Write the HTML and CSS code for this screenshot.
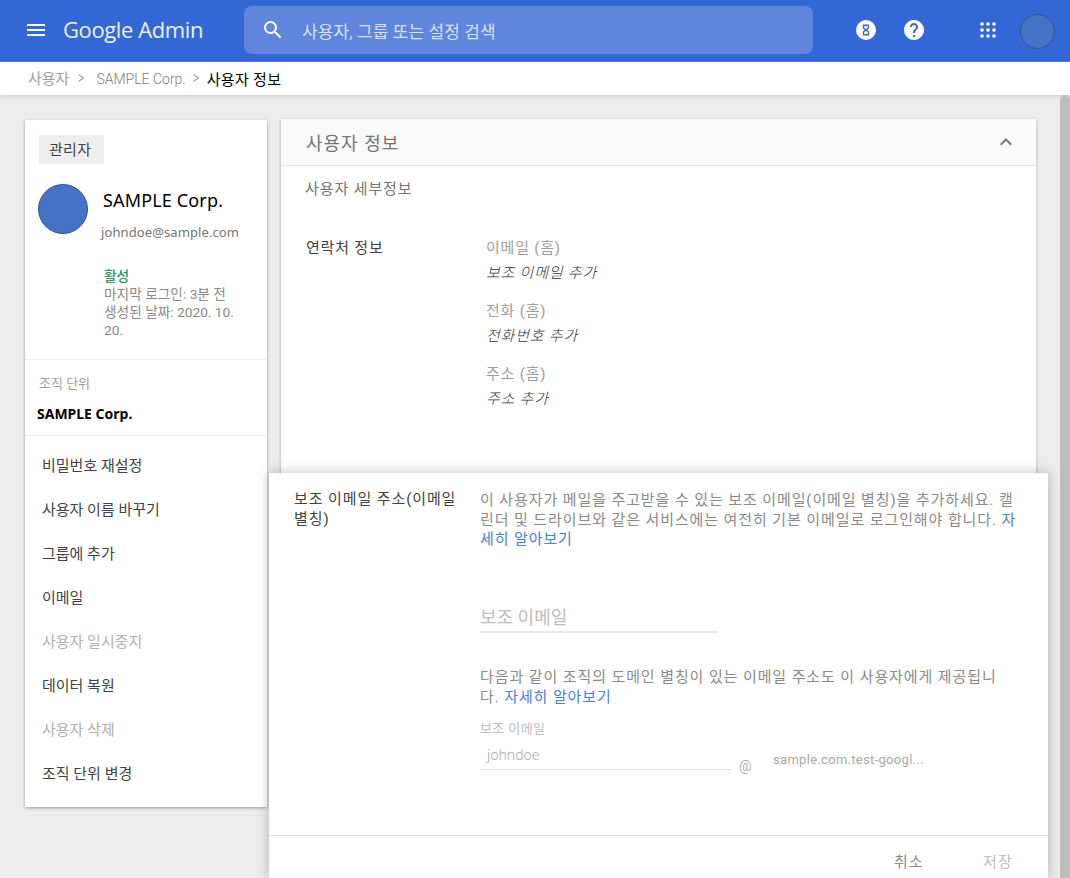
FILE: index.html
```html
<!DOCTYPE html>
<html lang="ko">

<head>
    <meta charset="UTF-8">
    <meta name="viewport" content="width=device-width, initial-scale=1.0">
    <title>Google Admin</title>
    <link rel="stylesheet" href="styles.css">
</head>

<body>
    <header class="top-bar">
        <svg class="menu-icon" width="24" height="24" viewBox="0 0 24 24"><path d="M3 18h18v-2H3zM3 13h18v-2H3zM3 6v2h18V6z" fill="#fff"/></svg>
        <div class="logo"><span class="logo-google">Google</span> <span class="logo-admin">Admin</span></div>
        <div class="search-box">
            <svg width="24" height="24" viewBox="0 0 24 24"><path d="M15.5 14h-.79l-.28-.27A6.47 6.47 0 0 0 16 9.5 6.5 6.5 0 1 0 9.5 16c1.61 0 3.09-.59 4.23-1.57l.27.28v.79l5 4.99L20.49 19zm-6 0C7.01 14 5 11.99 5 9.5S7.01 5 9.5 5 14 7.01 14 9.5 11.99 14 9.5 14z" fill="#fff"/></svg>
            <span>사용자, 그룹 또는 설정 검색</span>
        </div>
        <div class="top-actions">
            <svg class="timer-icon" width="20" height="20" viewBox="0 0 20 20"><circle cx="10" cy="10" r="10" fill="#fff"/><path fill-rule="evenodd" d="M6.800 4.500h6.400v3.800L11.300 10l1.900 1.700v3.800H6.800v-3.800L8.700 10 6.800 8.300zM8.200 5.900v1.800L10 9.200l1.800-1.500V5.900zM10 10.800l-1.800 1.500v1.800h3.600v-1.800z" fill="#3367d6"/></svg>
            <svg class="help-icon" width="24" height="24" viewBox="0 0 24 24"><path d="M12 2C6.480 2 2 6.480 2 12s4.480 10 10 10 10-4.480 10-10S17.520 2 12 2zm1 17h-2v-2h2zm2.070-7.750-.9.920C13.450 12.900 13 13.500 13 15h-2v-.5c0-1.100.45-2.100 1.170-2.830l1.240-1.260c.37-.36.590-.86.590-1.410 0-1.100-.9-2-2-2s-2 .9-2 2H8c0-2.210 1.790-4 4-4s4 1.790 4 4c0 .88-.36 1.680-.93 2.250z" fill="#fff"/></svg>
            <svg class="apps-icon" width="16" height="16" viewBox="0 0 16 16" fill="#fff"><circle cx="2" cy="2" r="1.800"/><circle cx="8" cy="2" r="1.800"/><circle cx="14" cy="2" r="1.800"/><circle cx="2" cy="8" r="1.800"/><circle cx="8" cy="8" r="1.800"/><circle cx="14" cy="8" r="1.800"/><circle cx="2" cy="14" r="1.800"/><circle cx="8" cy="14" r="1.800"/><circle cx="14" cy="14" r="1.800"/></svg>
            <div class="top-avatar"></div>
        </div>
    </header>

    <nav class="breadcrumb">
        <span class="crumb-root">사용자</span>
        <svg class="crumb-sep" width="8" height="10" viewBox="0 0 8 10"><path d="M1.500 1.500l5 3.500-5 3.500" fill="none" stroke="#9e9e9e" stroke-width="1.100"/></svg>
        <span class="crumb-org">SAMPLE Corp.</span>
        <svg class="crumb-sep crumb-sep-last" width="8" height="10" viewBox="0 0 8 10"><path d="M1.500 1.500l5 3.500-5 3.500" fill="none" stroke="#9e9e9e" stroke-width="1.100"/></svg>
        <span class="crumb-current">사용자 정보</span>
    </nav>

    <div class="page">
        <aside class="user-card">
            <div class="user-top">
                <div class="role-chip">관리자</div>
                <div class="user-head">
                    <div class="user-avatar"></div>
                    <div>
                        <div class="user-name">SAMPLE Corp.</div>
                        <div class="user-mail">johndoe@sample.com</div>
                    </div>
                </div>
                <div class="user-status">
                    <div class="status-active">활성</div>
                    <div>마지막 로그인: 3분 전</div>
                    <div>생성된 날짜: 2020. 10. 20.</div>
                </div>
            </div>
            <div class="org-unit">
                <div class="org-label">조직 단위</div>
                <div class="org-name">SAMPLE Corp.</div>
            </div>
            <ul class="action-list">
                <li>비밀번호 재설정</li>
                <li>사용자 이름 바꾸기</li>
                <li>그룹에 추가</li>
                <li>이메일</li>
                <li class="disabled">사용자 일시중지</li>
                <li>데이터 복원</li>
                <li class="disabled">사용자 삭제</li>
                <li>조직 단위 변경</li>
            </ul>
        </aside>

        <main class="info-card">
            <div class="info-head">
                <h2>사용자 정보</h2>
                <svg width="24" height="24" viewBox="0 0 24 24"><path d="M12 8l-6 6 1.410 1.410L12 10.830l4.590 4.580L18 14z" fill="#757575"/></svg>
            </div>
            <div class="info-sub">사용자 세부정보</div>
            <div class="contact">
                <div class="contact-title">연락처 정보</div>
                <div class="contact-list">
                    <div class="contact-label">이메일 (홈)</div>
                    <div class="contact-value">보조 이메일 추가</div>
                    <div class="contact-label">전화 (홈)</div>
                    <div class="contact-value">전화번호 추가</div>
                    <div class="contact-label">주소 (홈)</div>
                    <div class="contact-value">주소 추가</div>
                </div>
            </div>
        </main>
    </div>

    <section class="edit-panel">
        <div class="edit-body">
            <div class="edit-title">보조 이메일 주소(이메일 별칭)</div>
            <div class="edit-main">
                <p class="edit-text intro-text">이 사용자가 메일을 주고받을 수 있는 보조 이메일(이메일 별칭)을 추가하세요. 캘린더 및 드라이브와 같은 서비스에는 여전히 기본 이메일로 로그인해야 합니다. <a href="#">자세히 알아보기</a></p>
                <div class="big-input">보조 이메일</div>
                <p class="edit-text alias-text">다음과 같이 조직의 도메인 별칭이 있는 이메일 주소도 이 사용자에게 제공됩니다. <a href="#">자세히 알아보기</a></p>
                <div class="alias-label">보조 이메일</div>
                <div class="alias-row">
                    <div class="alias-input">johndoe</div>
                    <div class="alias-at">@</div>
                    <div class="alias-domain">sample.com.test-googl...</div>
                </div>
            </div>
        </div>
        <div class="edit-foot">
            <span class="btn-cancel">취소</span>
            <span class="btn-save">저장</span>
        </div>
    </section>

    <div class="scroll-thumb"></div>
</body>

</html>
```

FILE: styles.css
```css
body {
    margin: 0;
    height: 878px;
    overflow: hidden;
    position: relative;
    background-color: #ececec;
    color: #212121;
    font-family: Roboto, "Noto Sans CJK KR", sans-serif;
    font-size: 15px;
}

.top-bar {
    display: flex;
    align-items: center;
    height: 60px;
    padding: 0 0 1px 24px;
    background-color: #3367d6;
    border-bottom: 1px solid #4a7ade;
}

.logo {
    margin: -2px 0 0 15px;
    width: 181px;
    color: #fff;
    font-family: "Open Sans", sans-serif;
    font-size: 22px;
    letter-spacing: -0.4px;
    opacity: 0.9;
    white-space: nowrap;
}

.search-box {
    display: flex;
    align-items: center;
    gap: 17px;
    width: 569px;
    height: 48px;
    padding-left: 17px;
    box-sizing: border-box;
    background-color: #5f85dd;
    border-radius: 8px;
    color: #d9e3f8;
    font-size: 17px;
    letter-spacing: 0.1px;
}

.top-actions {
    display: flex;
    align-items: center;
    margin-left: 43px;
}

.help-icon {
    margin-left: 26px;
}

.apps-icon {
    margin-left: 54px;
}

.top-avatar {
    width: 33px;
    height: 33px;
    margin: 2px 0 0 24px;
    border-radius: 50%;
    background-color: #4472c4;
    border: 1px solid #2f5597;
}

.breadcrumb {
    display: flex;
    align-items: center;
    height: 33px;
    padding: 0 0 1px 28px;
    box-sizing: border-box;
    background-color: #fff;
    box-shadow: 0 1px 4px rgba(0, 0, 0, 0.15);
    color: #8a8a8a;
    font-size: 15px;
    position: relative;
}

.crumb-root {
    color: #9e9e9e;
    margin-top: -1px;
}

.crumb-sep {
    margin: 0 11px 0 8px;
}

.crumb-org {
    color: #808080;
    font-size: 14px;
    font-weight: 300;
    margin-top: 1px;
}

.crumb-sep-last {
    margin: 0 7px 0 6px;
}

.crumb-current {
    color: #000;
    letter-spacing: 0.3px;
}

.page {
    display: flex;
    align-items: flex-start;
    gap: 14px;
    padding: 24px 0 0 25px;
}

.user-card {
    width: 242px;
    margin-top: 1px;
    background-color: #fff;
    box-shadow: 0 1px 3px rgba(0, 0, 0, 0.35);
}

.user-top {
    padding: 15px 14px 20px 13px;
    border-bottom: 1px solid #eee;
}

.role-chip {
    width: 65px;
    margin-left: 1px;
    height: 29px;
    line-height: 30px;
    box-sizing: border-box;
    padding-left: 10px;
    background-color: #eee;
    color: #424242;
    letter-spacing: 0.3px;
}

.user-head {
    display: flex;
    gap: 13px;
    margin-top: 20px;
}

.user-avatar {
    flex: none;
    width: 50px;
    height: 50px;
    border-radius: 50%;
    background-color: #4472c4;
    border: 1px solid #2f5597;
    box-sizing: border-box;
}

.user-name {
    margin: 4px 0 0 2px;
    color: #000;
    font-family: "Noto Sans", sans-serif;
    font-size: 18px;
    letter-spacing: 0.15px;
}

.user-mail {
    margin-top: 11px;
    color: #757575;
    font-size: 13px;
    font-family: "Noto Sans", sans-serif;
    letter-spacing: 0.1px;
}

.user-status {
    margin: 26px 0 0 66px;
    width: 135px;
    color: #8a8a8a;
    font-size: 13.7px;
    line-height: 18px;
}

.status-active {
    color: #2e9468;
    font-weight: 500;
}

.org-unit {
    padding: 13px 12px 12px;
    border-bottom: 1px solid #eee;
}

.org-label {
    color: #9e9e9e;
    font-size: 13px;
    padding-left: 2px;
}

.org-name {
    margin-top: 12px;
    color: #000;
    font-family: "Noto Sans", sans-serif;
    font-weight: 700;
    font-size: 14px;
}

.action-list {
    list-style: none;
    margin: 0;
    padding: 8px 0 11px;
}

.action-list li {
    height: 44px;
    line-height: 44px;
    padding-left: 17px;
    color: #424242;
}

.action-list .disabled {
    color: #b0b0b0;
}

.info-card {
    width: 755px;
    height: 420px;
    background-color: #fff;
    box-shadow: 0 1px 3px rgba(0, 0, 0, 0.25);
}

.info-head {
    display: flex;
    align-items: center;
    justify-content: space-between;
    height: 46px;
    padding: 0 18px 0 25px;
    background-color: #fafafa;
    border-bottom: 1px solid #e4e4e4;
}

.info-head h2 {
    margin: 0;
    color: #757575;
    font-size: 18px;
    font-weight: 400;
    letter-spacing: 1px;
}

.info-sub {
    padding: 11px 0 0 24px;
    color: #757575;
    letter-spacing: 0.9px;
}

.contact {
    display: flex;
    margin-top: 40px;
    padding-left: 25px;
    letter-spacing: 0.8px;
}

.contact-title {
    width: 180px;
    color: #424242;
    line-height: 20px;
}

.contact-label {
    color: #9e9e9e;
    line-height: 20px;
}

.contact-value {
    margin: 5px 0 18px;
    color: #333;
    font-style: italic;
    font-weight: 300;
    line-height: 20px;
}

.edit-panel {
    position: absolute;
    left: 269px;
    top: 473px;
    width: 779px;
    height: 405px;
    background-color: #fff;
    box-shadow: 0 0 12px rgba(0, 0, 0, 0.25);
}

.edit-body {
    display: flex;
    height: 363px;
    border-bottom: 1px solid #e0e0e0;
    box-sizing: border-box;
    padding: 16px 24px 0 25px;
}

.edit-title {
    flex: none;
    width: 165px;
    margin-right: 21px;
    color: #424242;
    line-height: 20px;
    letter-spacing: 0.9px;
}

.edit-main {
    flex: 1;
    padding-top: 2px;
}

.edit-text {
    margin: 0;
    color: #8a8a8a;
    line-height: 19.5px;
    letter-spacing: 0.9px;
}

.edit-text a {
    color: #4a7de2;
    text-decoration: none;
}

.intro-text {
    width: 538px;
}

.big-input {
    width: 238px;
    height: 36px;
    margin-top: 47px;
    padding-top: 6px;
    box-sizing: border-box;
    border-bottom: 2px solid #e8e8e8;
    color: #bdbdbd;
    font-size: 18px;
    line-height: 30px;
}

.alias-text {
    margin-top: 34px;
    width: 525px;
    line-height: 20px;
}

.alias-label {
    margin-top: 15px;
    color: #bdbdbd;
    font-size: 13px;
    letter-spacing: 0.4px;
    line-height: 14px;
}

.alias-row {
    display: flex;
    align-items: flex-start;
    margin-top: 8px;
}

.alias-input {
    width: 244px;
    height: 23px;
    padding: 2px 0 0 7px;
    border-bottom: 1px solid #e0e0e0;
    color: #a8a8a8;
    font-size: 14px;
    font-family: "Noto Sans", sans-serif;
    font-weight: 300;
    line-height: 18px;
}

.alias-at {
    margin: 14px 0 0 8px;
    width: 34px;
    font-size: 14px;
    color: #b0b0b0;
}

.alias-domain {
    margin-top: 8px;
    color: #a8a8a8;
    font-size: 13px;
    letter-spacing: 0.3px;
}

.edit-foot {
    display: flex;
    justify-content: flex-end;
    gap: 59px;
    padding: 14px 35px 0 0;
    letter-spacing: 1.2px;
}

.btn-cancel {
    color: #8a8a8a;
}

.btn-save {
    color: #bdbdbd;
}

.scroll-thumb {
    position: absolute;
    right: 0;
    top: 95px;
    width: 10px;
    bottom: 0;
    background-color: #bdbdbd;
    border-radius: 5px 5px 0 0;
}
```
